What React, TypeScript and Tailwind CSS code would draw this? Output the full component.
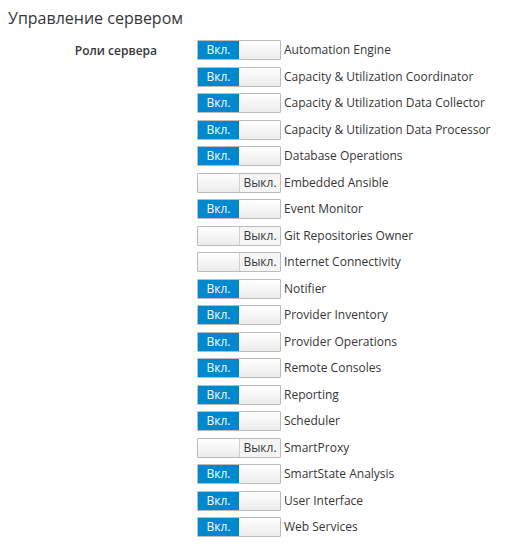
const roles: [string, boolean][] = [
  ['Automation Engine', true],
  ['Capacity & Utilization Coordinator', true],
  ['Capacity & Utilization Data Collector', true],
  ['Capacity & Utilization Data Processor', true],
  ['Database Operations', true],
  ['Embedded Ansible', false],
  ['Event Monitor', true],
  ['Git Repositories Owner', false],
  ['Internet Connectivity', false],
  ['Notifier', true],
  ['Provider Inventory', true],
  ['Provider Operations', true],
  ['Remote Consoles', true],
  ['Reporting', true],
  ['Scheduler', true],
  ['SmartProxy', false],
  ['SmartState Analysis', true],
  ['User Interface', true],
  ['Web Services', true],
];

function Toggle({ on }: { on: boolean }) {
  const handle = (
    <span className="w-[42px] h-full bg-gradient-to-b from-white to-[#ececec]" />
  );
  return (
    <span className="flex h-[20px] w-[84px] overflow-hidden rounded-[1px] border border-[#bbb] text-[12px] leading-none">
      {on ? (
        <>
          <span className="flex w-[42px] items-center justify-center bg-[#0088ce] text-white">Вкл.</span>
          {handle}
        </>
      ) : (
        <>
          {handle}
          <span className="flex w-[42px] items-center justify-center border-l border-[#d1d1d1] bg-[#f5f5f5] text-[#363636]">Выкл.</span>
        </>
      )}
    </span>
  );
}

export default function App() {
  return (
    <main className="min-h-screen bg-white text-[#363636] font-['Open_Sans',sans-serif]">
      <h1 className="px-[8px] pt-[6px] text-[16px] leading-[24px]">Управление сервером</h1>
      <div className="mt-[10px] flex">
        <div className="w-[157px] pt-[2px] text-right text-[12px] font-semibold">Роли сервера</div>
        <div className="ml-[40px] flex flex-col">
          {roles.map(([name, on]) => (
            <div key={name} className="flex h-[26.5px] items-start">
              <Toggle on={on} />
              <span className="ml-[3px] text-[12px] leading-[20px]">{name}</span>
            </div>
          ))}
        </div>
      </div>
    </main>
  );
}
